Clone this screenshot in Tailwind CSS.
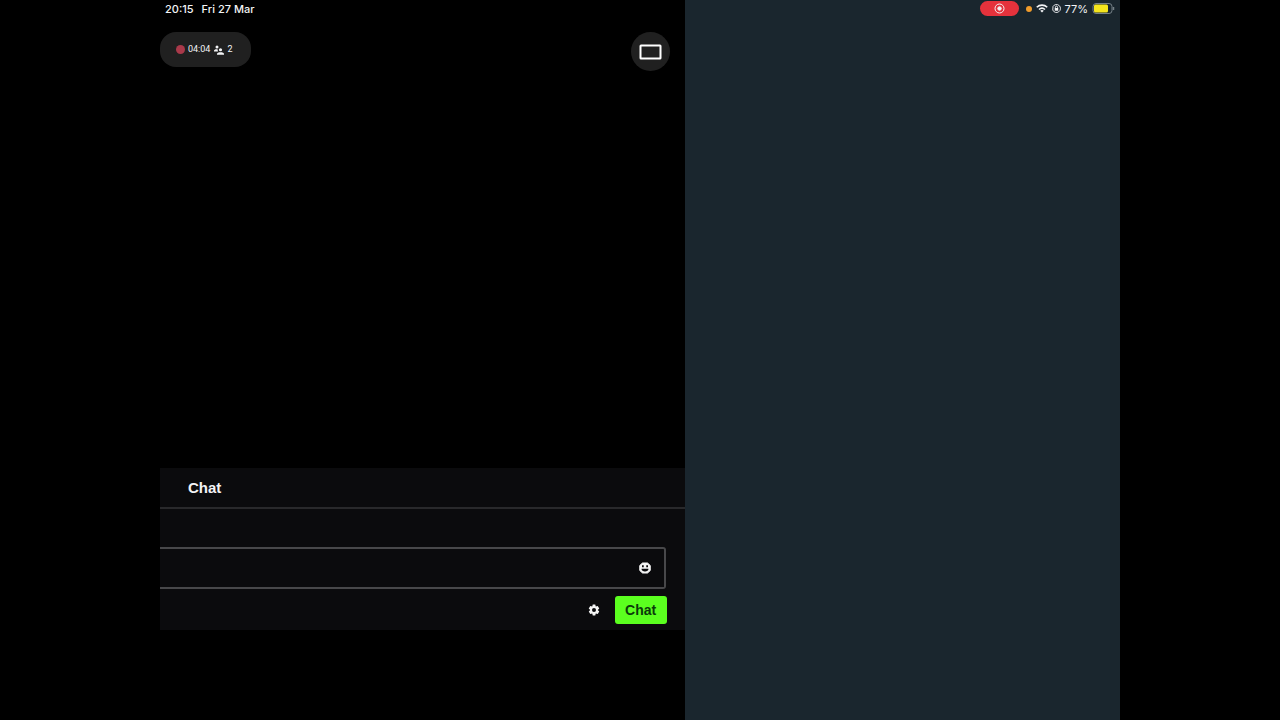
<!DOCTYPE html>
<html lang="en">
<head>
<meta charset="utf-8">
<meta name="viewport" content="width=device-width, initial-scale=1">
<title>Chat</title>
<script src="https://cdn.jsdelivr.net/npm/@tailwindcss/browser@4"></script>
</head>
<body class="bg-black font-['Inter',sans-serif] text-white">
<main class="mx-[12.5%] flex min-h-screen">
  <section class="flex min-w-0 flex-1 flex-col pb-[90px]">
    <header class="flex h-[18px] items-center gap-2 pl-[5px] text-[11px] leading-[18px] font-medium text-gray-100">
      <time>20:15</time>
      <span>Fri 27 Mar</span>
    </header>
    <div class="mt-[14px] flex items-start justify-between pr-[15px]">
      <div class="flex h-[35px] w-[91px] items-center rounded-[16px] bg-[#202020] pl-4 font-['Roboto',sans-serif] text-[9px] leading-[13px] text-gray-100">
        <span class="size-[9px] rounded-full bg-[#a9394a]"></span>
        <span class="ml-[3px]">04:04</span>
        <svg class="ml-1 size-[10px]" viewBox="0 0 20 20" fill="currentColor" aria-hidden="true">
          <circle cx="6" cy="4" r="3"/>
          <path d="M0 13V11.500C0 9 3 8 7 8.500L8 13Z"/>
          <circle cx="13" cy="9.500" r="3.200"/>
          <path d="M6 19.500V18C6 15.500 9 14.500 13 14.500S20 15.500 20 18V19.500Z"/>
        </svg>
        <span class="ml-[3px]">2</span>
      </div>
      <button type="button" aria-label="Change view" class="flex size-[39px] items-center justify-center rounded-full bg-[#202020]">
        <svg class="h-4 w-[23px]" viewBox="0 0 23 16" fill="none" stroke="currentColor" stroke-width="2" aria-hidden="true"><rect x="1.500" y="1.500" width="20" height="13" rx="0.500"/></svg>
      </button>
    </div>
    <form class="mt-auto bg-[#0b0b0d] pb-[6px] font-['Liberation_Sans',sans-serif]">
      <h1 class="h-[41px] border-b-2 border-[#29292b] pl-7 text-[15px] leading-[39px] font-bold text-gray-100">Chat</h1>
      <div class="mt-[38px] mr-[19px] flex h-[42px] items-center rounded-r-[3px] border-2 border-l-0 border-[#48484a] pr-[13px]">
        <input type="text" aria-label="Message" class="h-full min-w-0 flex-1 bg-transparent px-4 outline-none">
        <button type="button" aria-label="Emoji" class="size-3">
          <svg class="size-3" viewBox="0 0 24 24" aria-hidden="true">
            <path fill="#f5f5f5" d="M7 2H17L22.500 7V17L17 22H7L1.500 17V7Z" stroke="#f5f5f5" stroke-width="2" stroke-linejoin="round"/>
            <path fill="#0b0b0d" d="M6 6.500H9.500V10.500H6ZM14.500 6.500H18V10.500H14.500ZM5 13.500H19C19 17 16 19 12 19S5 17 5 13.500Z"/>
          </svg>
        </button>
      </div>
      <div class="mt-[7px] mr-[18px] flex items-center justify-end gap-[15px]">
        <button type="button" aria-label="Chat settings" class="size-3">
          <svg class="size-3" viewBox="0 0 24 24" fill="#f5f5f5" aria-hidden="true">
            <path fill-rule="evenodd" d="M9.500 1H14.500L15.500 5L19.500 4L22.500 9L19.500 12L22.500 15L19.500 20L15.500 19L14.500 23H9.500L8.500 19L4.500 20L1.500 15L4.500 12L1.500 9L4.500 4L8.500 5ZM12 8A4 4 0 1 0 12 16A4 4 0 1 0 12 8Z"/>
          </svg>
        </button>
        <button type="submit" class="h-7 w-[52px] rounded-[3px] bg-[#5bff1f] text-[14px] leading-7 font-bold text-[#0b3a0b]">Chat</button>
      </div>
    </form>
  </section>
  <aside class="w-[45.35%] shrink-0 bg-[#1a262e]">
    <div class="flex h-[17px] items-center justify-end pr-[5px] text-[11px] leading-4 text-gray-100">
      <span class="mr-[7px] flex h-[15px] w-[39px] items-center justify-center rounded-full bg-[#e5323c]">
        <svg class="size-[11px]" viewBox="0 0 22 22" fill="none" stroke="currentColor" stroke-width="2" aria-label="Recording"><circle cx="11" cy="11" r="9"/><circle cx="11" cy="11" r="3.500" fill="currentColor"/></svg>
      </span>
      <span class="mr-1 size-[6px] rounded-full bg-[#f19c2b]"></span>
      <svg class="mr-1 h-[9px] w-3" viewBox="0 0 24 18" fill="none" stroke="currentColor" stroke-width="3.200" aria-label="Wi-Fi"><path d="M1.500 6.500C7.500 0.800 16.500 0.800 22.500 6.500"/><path d="M6 11C9.500 7.700 14.500 7.700 18 11"/><path d="M12 17L8.500 13.500C10.500 11.700 13.500 11.700 15.500 13.500Z" fill="currentColor" stroke="none"/></svg>
      <svg class="mr-1 size-[9px]" viewBox="0 0 18 18" fill="none" stroke="currentColor" stroke-width="1.800" aria-label="Orientation lock"><path d="M2 5A8 8 0 1 1 1.500 12L2 5"/><rect x="5.500" y="8" width="7" height="5.500" fill="currentColor" stroke="none"/><path d="M6.800 8V6.500A2.200 2.200 0 0 1 11.200 6.500V8"/></svg>
      <span class="mr-1">77%</span>
      <svg class="h-[11px] w-[23px]" viewBox="0 0 23 11" fill="none" aria-label="Battery"><rect x="1" y="0.500" width="19" height="10" rx="3" stroke="#758087"/><rect x="2" y="1.500" width="14" height="8" rx="1.500" fill="#f5e51d"/><path d="M21.500 4V7" stroke="#758087" stroke-width="1.500"/></svg>
    </div>
  </aside>
</main>
</body>
</html>
